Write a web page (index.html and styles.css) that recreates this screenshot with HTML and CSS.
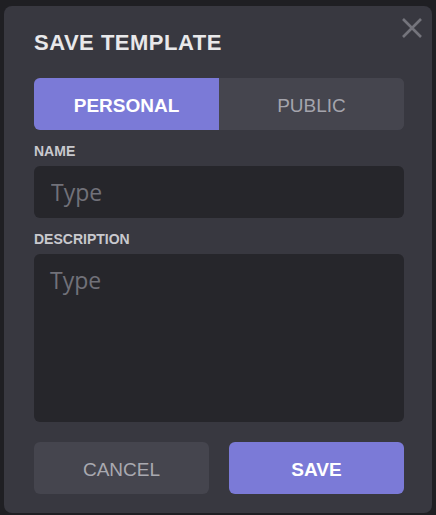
FILE: index.html
```html
<!DOCTYPE html>
<html>
<head>
<meta charset="utf-8">
<link rel="stylesheet" href="styles.css">
</head>
<body>
<div class="modal">
  <button class="close" aria-label="Close">
    <svg width="22" height="22" viewBox="0 0 22 22"><path d="M2 2 L20 20 M20 2 L2 20" stroke="#74747c" stroke-width="2.6" fill="none"/></svg>
  </button>
  <h1 class="title">SAVE TEMPLATE</h1>
  <div class="toggle">
    <button class="seg seg-active">PERSONAL</button>
    <button class="seg">PUBLIC</button>
  </div>
  <label class="label label-name">NAME</label>
  <input class="field" type="text" placeholder="Type">
  <label class="label label-desc">DESCRIPTION</label>
  <textarea class="area" placeholder="Type"></textarea>
  <div class="actions">
    <button class="btn btn-cancel">CANCEL</button>
    <button class="btn btn-save">SAVE</button>
  </div>
</div>
</body>
</html>
```

FILE: styles.css
```css
html, body {
  margin: 0;
  padding: 0;
}
body {
  width: 436px;
  height: 515px;
  background: #1f1f23;
  padding: 6px 0 0 4px;
  box-sizing: border-box;
  font-family: "Liberation Sans", Arial, sans-serif;
  overflow: hidden;
}
.modal {
  position: relative;
  width: 428px;
  height: 507px;
  box-sizing: border-box;
  background: #383840;
  border-radius: 8px;
  padding: 26px 28px 19px 30px;
  display: flex;
  flex-direction: column;
}
.close {
  position: absolute;
  top: 11px;
  right: 9px;
  width: 22px;
  height: 22px;
  padding: 0;
  border: 0;
  background: transparent;
  display: flex;
}
.title {
  margin: 0;
  font-size: 22px;
  line-height: 22px;
  letter-spacing: 0.5px;
  font-weight: 700;
  color: #e8e8ea;
}
.toggle {
  margin-top: 24px;
  display: flex;
  height: 52px;
  border-radius: 6px;
  overflow: hidden;
  background: #45454e;
}
.seg {
  flex: 1;
  border: 0;
  margin: 0;
  padding: 3px 0 0;
  font-family: "Liberation Sans", Arial, sans-serif;
  font-size: 19px;
  color: #a4a4ac;
  background: #45454e;
}
.seg-active {
  background: #7b7ad7;
  color: #ffffff;
  font-weight: 700;
  flex: 0 0 185px;
}
.label {
  display: block;
  font-size: 14px;
  line-height: 14px;
  font-weight: 700;
  color: #c9c9ce;
}
.label-name {
  margin-top: 14px;
}
.label-desc {
  margin-top: 14px;
}
.field, .area {
  margin-top: 8px;
  border: 0;
  outline: none;
  background: #26262b;
  border-radius: 6px;
  font-family: "Open Sans", sans-serif;
  font-size: 23px;
  color: #e0e0e0;
  box-sizing: border-box;
  width: 100%;
}
.field {
  height: 52px;
  padding: 0 17px;
}
.area {
  height: 168px;
  padding: 11px 16px;
  resize: none;
  line-height: 31px;
}
.field::placeholder, .area::placeholder {
  color: #717179;
}
.actions {
  margin-top: 20px;
  display: flex;
  gap: 20px;
}
.btn {
  flex: 1;
  height: 52px;
  border: 0;
  border-radius: 6px;
  padding: 3px 0 0;
  font-family: "Liberation Sans", Arial, sans-serif;
  font-size: 19px;
}
.btn-cancel {
  background: #45454e;
  color: #a9a9b0;
}
.btn-save {
  background: #7b7ad7;
  color: #ffffff;
  font-weight: 700;
}
```
